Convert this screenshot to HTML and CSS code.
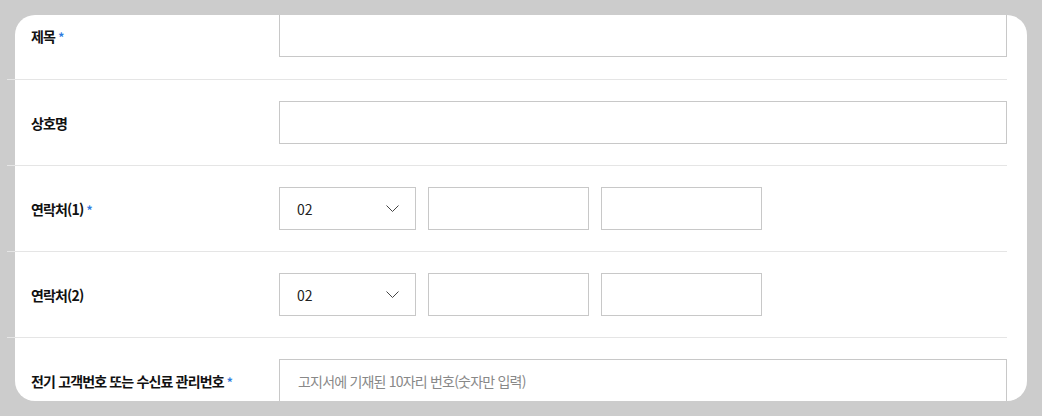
FILE: index.html
```html
<!DOCTYPE html>
<html lang="ko">
<head>
<meta charset="utf-8">
<link rel="stylesheet" href="styles.css">
</head>
<body>
<div class="card">
  <form class="form">
    <div class="row first">
      <div class="label">제목 <span class="req">*</span></div>
      <div class="field"><input class="text full" type="text"></div>
    </div>
    <div class="row">
      <div class="label">상호명</div>
      <div class="field"><input class="text full" type="text"></div>
    </div>
    <div class="row">
      <div class="label">연락처(1) <span class="req">*</span></div>
      <div class="field phone">
        <div class="select"><span>02</span>
          <svg class="chev" width="13" height="7" viewBox="0 0 13 7"><path d="M0.5 0.5l6 6 6-6" fill="none" stroke="#444" stroke-width="1"/></svg>
        </div>
        <input class="text part" type="text">
        <input class="text part" type="text">
      </div>
    </div>
    <div class="row">
      <div class="label">연락처(2)</div>
      <div class="field phone">
        <div class="select"><span>02</span>
          <svg class="chev" width="13" height="7" viewBox="0 0 13 7"><path d="M0.5 0.5l6 6 6-6" fill="none" stroke="#444" stroke-width="1"/></svg>
        </div>
        <input class="text part" type="text">
        <input class="text part" type="text">
      </div>
    </div>
    <div class="row">
      <div class="label">전기 고객번호 또는 수신료 관리번호 <span class="req">*</span></div>
      <div class="field"><input class="text full" type="text" placeholder="고지서에 기재된 10자리 번호(숫자만 입력)"></div>
    </div>
  </form>
</div>
</body>
</html>
```

FILE: styles.css
```css
html, body {
  margin: 0;
  padding: 0;
  background: #cccccc;
  font-family: "Noto Sans CJK KR", "Noto Sans", sans-serif;
}
body {
  padding: 15px 0 0 15px;
}
.card {
  display: flow-root;
  width: 992px;
  height: 386px;
  padding-right: 20px;
  background: #ffffff;
  border-radius: 20px;
  overflow-x: visible;
  overflow-y: clip;
}
.form {
  margin: -22px 0 0 -8px;
  width: 1000px;
}
.row {
  display: flex;
  align-items: center;
  padding: 21px 0;
  border-bottom: 1px solid #e5e5e5;
}
.row.first {
  padding-bottom: 22px;
}
.label {
  width: 248px;
  padding-left: 24px;
  font-size: 14px;
  font-weight: 700;
  color: #111;
  letter-spacing: -0.85px;
}
.req {
  color: #2f7be0;
  font-size: 12px;
  letter-spacing: 0;
}
.field {
  flex: 1;
  display: flex;
}
.phone {
  gap: 12px;
}
.text {
  box-sizing: border-box;
  height: 43px;
  border: 1px solid #c8c8c8;
  border-radius: 0;
  margin: 0;
  padding: 0 18px;
  font-family: inherit;
  font-size: 14px;
  letter-spacing: -0.8px;
  color: #333;
  background: #fff;
  outline: none;
}
.text::placeholder {
  color: #888;
}
.full {
  width: 100%;
}
.part {
  width: 161px;
}
.select {
  box-sizing: border-box;
  width: 137px;
  height: 43px;
  border: 1px solid #c8c8c8;
  display: flex;
  align-items: center;
  justify-content: space-between;
  padding: 0 16px 0 17px;
  font-size: 14px;
  color: #222;
}
.chev {
  display: block;
}
```
